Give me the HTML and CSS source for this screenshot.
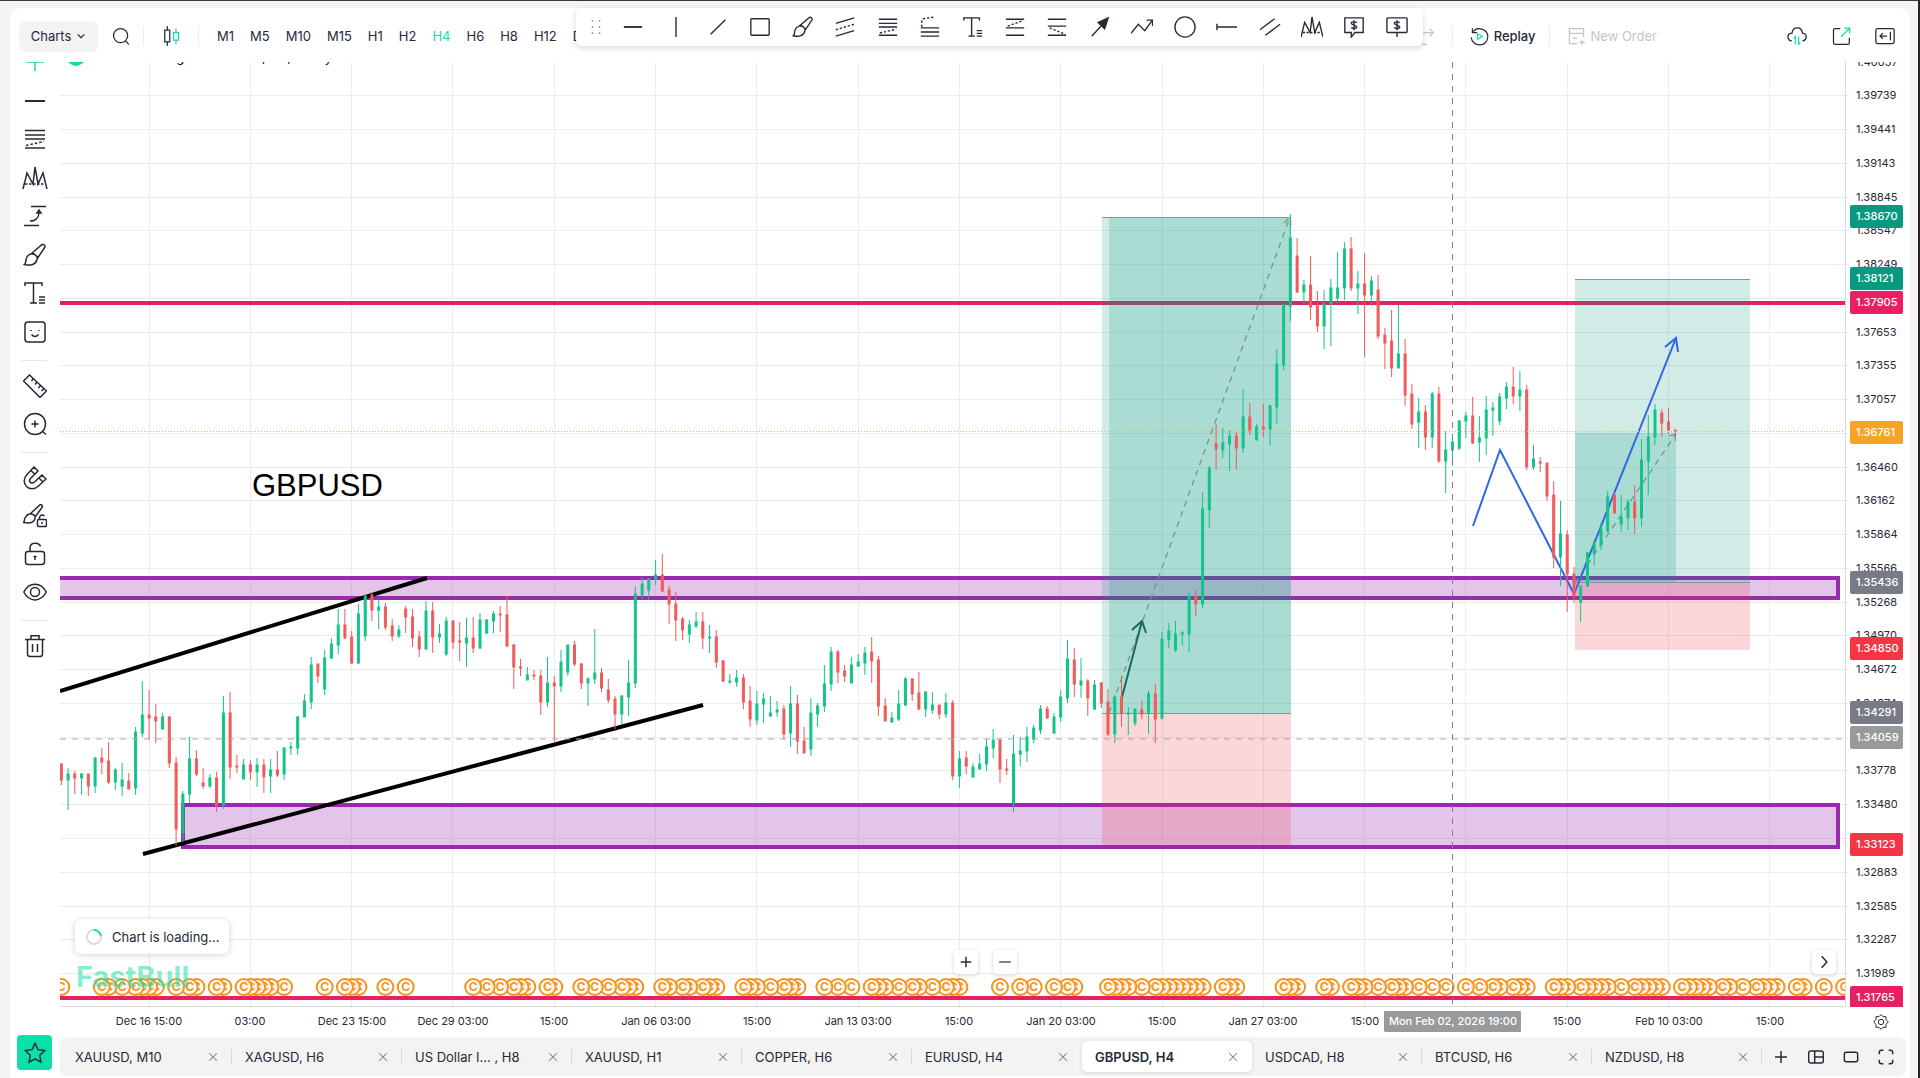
FILE: index.html
```html
<!DOCTYPE html>
<html lang="en">
<head>
    <meta charset="utf-8"/>
    <title>GBPUSD, H4</title>
    <meta name="viewport" content="width=device-width, initial-scale=1.0"/>
    <link rel="stylesheet" href="styles.css">
</head>
<body>
<svg class="sprite" aria-hidden="true">
    <symbol id="i-cross" viewBox="0 0 24 24"><path d="M3 12h18M12 3v18"/></symbol>
    <symbol id="i-hline" viewBox="0 0 24 24"><path d="M2 12h20" stroke-width="2"/></symbol>
    <symbol id="i-vline" viewBox="0 0 24 24"><path d="M12 1v22"/></symbol>
    <symbol id="i-trend" viewBox="0 0 24 24"><path d="M4 20L20 4"/></symbol>
    <symbol id="i-rect" viewBox="0 0 24 24"><rect x="2" y="3" width="20" height="18" rx="1"/></symbol>
    <symbol id="i-brush" viewBox="0 0 24 24"><path d="M8 11L19 1.500q3-.5 3 2.500L14 16M8 11c4-.5 7 2 6 5.500-1 5-6 6.500-12.500 5 1.500-1 1-3 1.500-5s2.500-5 5-5.500zM9.500 9.500l5.500 5"/></symbol>
    <symbol id="i-channel" viewBox="0 0 24 24"><path d="M2 8L22 2M2 22l20-6"/><path d="M2 15l20-6" stroke-dasharray="2.500 2"/></symbol>
    <symbol id="i-fib" viewBox="0 0 24 24"><path d="M2 3.500h20M2 8h20M2 12h20M2 21h20"/><path d="M3 18.500L21 14.500" stroke-dasharray="2.500 2"/></symbol>
    <symbol id="i-fibext" viewBox="0 0 24 24"><path d="M2 13h20M2 17.500h20M2 22h20"/><path d="M3 12V6q0-3 4-3.500L17 1" stroke-dasharray="2.500 2"/></symbol>
    <symbol id="i-text" viewBox="0 0 24 24"><path d="M2 5V2h17v3M10.500 2v20M7 22h7M16 16h6M16 19h6M16 22h6"/></symbol>
    <symbol id="i-proj" viewBox="0 0 24 24"><path d="M2 3.500h20M2 13h20M2 21h20"/><path d="M4 11L21 5" stroke-dasharray="2.500 2"/></symbol>
    <symbol id="i-projdown" viewBox="0 0 24 24"><path d="M2 3.500h20M2 11h20M2 21h20"/><path d="M4 13L21 20" stroke-dasharray="2.500 2"/></symbol>
    <symbol id="i-arrow" viewBox="0 0 24 24"><path d="M3 22L15 9"/><path class="solid" d="M21 2L10 7l7 7z"/></symbol>
    <symbol id="i-zigzag" viewBox="0 0 24 24"><path d="M0 19L8 9l7 7L23 5M17 4.500h6.500V11"/></symbol>
    <symbol id="i-ellipse" viewBox="0 0 24 24"><circle cx="12" cy="12" r="11"/></symbol>
    <symbol id="i-ray" viewBox="0 0 24 24"><path d="M1 8.500v7M1 12h22"/></symbol>
    <symbol id="i-parallel" viewBox="0 0 24 24"><path d="M1 15L17 3M7 21L23 9"/></symbol>
    <symbol id="i-wave" viewBox="0 0 24 24"><path d="M0 23L4 7l6 11L12 1l3 17 5-11 4 16"/><path d="M2 18h20" stroke-dasharray="2.500 1.500"/></symbol>
    <symbol id="i-callout" viewBox="0 0 24 24"><path d="M2 2h20v16h-9l-4 5v-5H2z"/><path d="M15 7.500c-1-1.500-6-1.500-6 .5s6 2 6 4-5 2-6 .5M12 4.500v11"/></symbol>
    <symbol id="i-pricenote" viewBox="0 0 24 24"><rect x="1" y="2" width="22" height="16" rx="1"/><path d="M15 7.500c-1-1.500-6-1.500-6 .5s6 2 6 4-5 2-6 .5M12 4.500v11M12 18v5"/></symbol>
    <symbol id="i-long" viewBox="0 0 24 24"><path d="M8 2.500h15M1 21.500h15M7 17c6 0 9-4 9-9"/><path class="solid" d="M16 6l-2 3h4z"/></symbol>
    <symbol id="i-smile" viewBox="0 0 24 24"><rect x="2" y="2" width="20" height="20" rx="3"/><path d="M8 10v1M16 10v1M8.500 14.500q3.500 4 7 0"/></symbol>
    <symbol id="i-ruler" viewBox="0 0 24 24"><path d="M6.500 1l17 16-6.500 6.500L.5 7zM8.500 7l2-2.500M12 10.500L14 8M15.500 14l2-2.500M18.500 17l2-2"/></symbol>
    <symbol id="i-zoom" viewBox="0 0 24 24"><circle cx="12" cy="12" r="10.500"/><path d="M12 8.500v7M8.500 12h7M19.500 19.500l3.500 3"/></symbol>
    <symbol id="i-magnet" viewBox="0 0 24 24"><path d="M11 1L4 8.500C-4 17 7 28 15.500 20L23 13l-4-4-7.500 7c-3 2.500-6.500-.5-4-3.500L15 5zM8 4.500l4 4M16 12l4 4"/></symbol>
    <symbol id="i-brushlock" viewBox="0 0 24 24"><path d="M7 10L17 .8q2.500-.5 2.500 2L12 13M7 10c3-.5 6 2 5 4.500-1 4-6 5-11.500 4C2 17 1 16 2 14s2.500-4 5-4z"/><rect x="14.500" y="15.500" width="9" height="7" rx="1"/><path d="M16.500 15.500V13q2-3.500 5-1M19 18v2"/></symbol>
    <symbol id="i-lock" viewBox="0 0 24 24"><rect x="2.500" y="9.500" width="19" height="13" rx="2.500"/><path d="M7 9.500V6c0-6 9-6 10.500-1.500M10.500 14.500h3M12 14.500v3.500"/></symbol>
    <symbol id="i-eye" viewBox="0 0 24 24"><path d="M.8 12C6 1.500 18 1.500 23.200 12 18 22.500 6 22.500.8 12z"/><circle cx="12" cy="12" r="4.500"/></symbol>
    <symbol id="i-trash" viewBox="0 0 24 24"><path d="M2 5.500h20M8 5V1.800h8V5M4.500 5.500V20q0 2.500 2.500 2.500h10q2.500 0 2.500-2.500V5.500M9.500 10v8M14.500 10v8"/></symbol>
    <symbol id="i-search" viewBox="0 0 24 24"><circle cx="11.500" cy="11.500" r="8.500"/><path d="M17.500 18l4 4"/></symbol>
    <symbol id="i-close" viewBox="0 0 24 24"><path d="M3 3l18 18M21 3L3 21"/></symbol>
    <symbol id="i-plus" viewBox="0 0 24 24"><path d="M12 3v18M3 12h18"/></symbol>
    <symbol id="i-gear" viewBox="0 0 24 24"><path d="M12 1l3 3h4.500v4.500L23 12l-3.500 3.500V20H15l-3 3-3-3H4.500v-4.500L1 12l3.500-3.500V4H9z"/><circle cx="12" cy="12" r="4"/></symbol>
</svg>

<div class="panel">
    <header class="toolbar">
        <button class="charts_btn">Charts
            <svg class="icon chevron" viewBox="0 0 12 12"><path d="M2 4l4 4 4-4"/></svg>
        </button>
        <button class="search_btn" aria-label="Search"><svg class="icon"><use href="#i-search"/></svg></button>
        <span class="divider"></span>
        <button class="type_btn" aria-label="Chart type">
            <svg class="icon" viewBox="0 0 24 24">
                <path d="M7.500 0v5M7.500 19v5M4.500 5h6v14h-6z"/>
                <path class="mint" d="M18 3v5M18 17v5M15 8h6v9h-6z"/>
            </svg>
        </button>
        <span class="divider"></span>
        <nav class="periods">
            <button>M1</button>
            <button>M5</button>
            <button>M10</button>
            <button>M15</button>
            <button>H1</button>
            <button>H2</button>
            <button class="active">H4</button>
            <button>H6</button>
            <button>H8</button>
            <button>H12</button>
            <button>D1</button>
        </nav>
        <div class="toolbar_right">
            <button class="muted" aria-label="Redo">
                <svg class="icon" viewBox="0 0 24 24"><path d="M22 7H11c-10 0-10 15 0 15h3M17 2l5 5-5 5"/></svg>
            </button>
            <span class="divider"></span>
            <button class="replay">
                <svg class="icon" viewBox="0 0 24 24">
                    <path d="M4 6C9-1 22 2 22.500 12c0 14-20 14-21 1M3 1.500V7h6"/>
                    <path class="mint" d="M9.500 8.500v7l6-3.500z"/>
                </svg>
                Replay
            </button>
            <span class="divider"></span>
            <button class="muted new_order">
                <svg class="icon" viewBox="0 0 24 24"><path d="M13 21H3V2h18v11M3 8h18M7 14h6M19 16v7M15.500 19.500h7"/></svg>
                New Order
            </button>
        </div>
        <div class="toolbar_end">
            <button aria-label="Cloud sync">
                <svg class="icon" viewBox="0 0 24 24">
                    <path d="M6 18C-1 17 0 8 6 8.500 7 0 18 0 18.500 8.500 25 9 24 17 18.500 18"/>
                    <path class="mint" d="M10 22v-9l-2 2M14 13v9l2-2"/>
                </svg>
            </button>
            <button aria-label="Open in new window">
                <svg class="icon" viewBox="0 0 24 24">
                    <path d="M11 3H5Q3 3 3 5v15q0 2 2 2h15q2 0 2-2v-6"/>
                    <path class="mint" d="M12 13L22 3M16 2.500h6.500V9"/>
                </svg>
            </button>
            <button aria-label="Collapse panel">
                <svg class="icon" viewBox="0 0 24 24"><rect x="1" y="3" width="22" height="18" rx="2"/><path d="M18.500 7v10M14.500 12H6M9.500 8.500L6 12l3.500 3.500"/></svg>
            </button>
        </div>
    </header>

    <div class="draw_bar">
        <svg class="drag" viewBox="0 0 12 18">
            <circle cx="2" cy="2" r="1"/><circle cx="10" cy="2" r="1"/>
            <circle cx="2" cy="9" r="1"/><circle cx="10" cy="9" r="1"/>
            <circle cx="2" cy="16" r="1"/><circle cx="10" cy="16" r="1"/>
        </svg>
        <button aria-label="Horizontal line"><svg class="icon"><use href="#i-hline"/></svg></button>
        <button aria-label="Vertical line"><svg class="icon"><use href="#i-vline"/></svg></button>
        <button aria-label="Trend line"><svg class="icon"><use href="#i-trend"/></svg></button>
        <button aria-label="Rectangle"><svg class="icon"><use href="#i-rect"/></svg></button>
        <button aria-label="Brush"><svg class="icon"><use href="#i-brush"/></svg></button>
        <button aria-label="Channel"><svg class="icon"><use href="#i-channel"/></svg></button>
        <button aria-label="Fibonacci"><svg class="icon"><use href="#i-fib"/></svg></button>
        <button aria-label="Fibonacci extension"><svg class="icon"><use href="#i-fibext"/></svg></button>
        <button aria-label="Text"><svg class="icon"><use href="#i-text"/></svg></button>
        <button aria-label="Long position"><svg class="icon"><use href="#i-proj"/></svg></button>
        <button aria-label="Short position"><svg class="icon"><use href="#i-projdown"/></svg></button>
        <button aria-label="Arrow"><svg class="icon"><use href="#i-arrow"/></svg></button>
        <button aria-label="Path"><svg class="icon"><use href="#i-zigzag"/></svg></button>
        <button aria-label="Ellipse"><svg class="icon"><use href="#i-ellipse"/></svg></button>
        <button aria-label="Horizontal ray"><svg class="icon"><use href="#i-ray"/></svg></button>
        <button aria-label="Parallel lines"><svg class="icon"><use href="#i-parallel"/></svg></button>
        <button aria-label="Waves"><svg class="icon"><use href="#i-wave"/></svg></button>
        <button aria-label="Price label"><svg class="icon"><use href="#i-callout"/></svg></button>
        <button aria-label="Price note"><svg class="icon"><use href="#i-pricenote"/></svg></button>
    </div>

    <main class="workspace">
        <aside class="tools">
            <div class="tools_group lines">
                <button class="active" aria-label="Crosshair"><svg class="icon"><use href="#i-cross"/></svg></button>
                <button aria-label="Lines"><svg class="icon"><use href="#i-hline"/></svg></button>
                <button aria-label="Fibonacci tools"><svg class="icon"><use href="#i-fib"/></svg></button>
                <button aria-label="Patterns"><svg class="icon wide"><use href="#i-wave"/></svg></button>
                <button aria-label="Positions"><svg class="icon"><use href="#i-long"/></svg></button>
                <button aria-label="Brushes"><svg class="icon"><use href="#i-brush"/></svg></button>
                <button aria-label="Text tools"><svg class="icon"><use href="#i-text"/></svg></button>
                <button aria-label="Stickers"><svg class="icon"><use href="#i-smile"/></svg></button>
            </div>
            <hr>
            <div class="tools_group">
                <button aria-label="Measure"><svg class="icon"><use href="#i-ruler"/></svg></button>
                <button aria-label="Zoom in"><svg class="icon"><use href="#i-zoom"/></svg></button>
            </div>
            <hr>
            <div class="tools_group">
                <button aria-label="Magnet"><svg class="icon"><use href="#i-magnet"/></svg></button>
                <button aria-label="Keep drawing"><svg class="icon"><use href="#i-brushlock"/></svg></button>
                <button aria-label="Lock drawings"><svg class="icon"><use href="#i-lock"/></svg></button>
                <button aria-label="Hide drawings"><svg class="icon"><use href="#i-eye"/></svg></button>
            </div>
            <hr>
            <div class="tools_group">
                <button aria-label="Remove drawings"><svg class="icon"><use href="#i-trash"/></svg></button>
            </div>
        </aside>

        <section class="chart">
            <svg class="chart_svg" viewBox="60 62 1850 975" preserveAspectRatio="xMinYMin slice">
                <defs>
                    <clipPath id="plot"><rect x="60" y="62" width="1785" height="944"/></clipPath>
                    <clipPath id="scale"><rect x="1845" y="62" width="65" height="945"/></clipPath>
                </defs>
                <g id="grid" class="grid"></g>
                <path class="axis" d="M60 1006.500H1845.500V62"/>

                <g clip-path="url(#plot)">
                    <circle class="logo_dot" cx="76" cy="57" r="9"/>
                    <text class="legend" x="94" y="62">Pound Sterling vs US Dollar, H4, Today</text>

                    <path class="level" d="M60 303H1845"/>
                    <rect class="zone" x="50" y="578" width="1788" height="20"/>
                    <rect class="zone" x="183" y="805" width="1655" height="42"/>
                    <path class="trend" d="M60 691L427 578M143 854L703 705"/>
                    <text class="note" x="252" y="496">GBPUSD</text>

                    <g class="position">
                        <rect class="profit" x="1102" y="217" width="189" height="496"/>
                        <rect class="profit" x="1109" y="217" width="182" height="496"/>
                        <rect class="loss" x="1102" y="713" width="189" height="133"/>
                        <path class="edge" d="M1102 217.500H1291M1102 713.500H1291"/>
                        <path class="path_line" d="M1109 713L1290 217M1284 223l6-6 1 8"/>
                    </g>
                    <g class="position">
                        <rect class="profit" x="1575" y="279" width="175" height="304"/>
                        <rect class="profit" x="1575" y="433" width="101" height="150"/>
                        <rect class="loss" x="1575" y="583" width="175" height="67"/>
                        <path class="edge" d="M1575 279.500H1750M1575 582.500H1750"/>
                        <path class="path_line" d="M1575 583L1676 434M1669 436l7-2-1 7"/>
                    </g>
                    <path class="arrow_green" d="M1122 697L1142 621M1132 630l10-9 4 12"/>
                    <path class="arrow_blue" d="M1473 526L1500 450L1574 594L1676 338M1665 347l11-9 2 14"/>

                    <g id="candles"></g>
                    <path class="price_line" d="M60 431.500H1845"/>
                    <g id="coins" class="coins"></g>
                    <text class="watermark" x="76" y="987">FastBull</text>
                    <path class="level bottom" d="M60 998H1845"/>
                    <path class="cross_x" d="M60 739H1845"/>
                    <path class="cross_y" d="M1452.500 62V1006"/>
                </g>

                <g id="prices" class="prices" clip-path="url(#scale)"></g>
                <g id="times" class="times"></g>
            </svg>

            <div class="toast"><span class="spinner"></span>Chart is loading...</div>
            <div class="zoom_btns">
                <button aria-label="Zoom in"><svg class="icon"><use href="#i-plus"/></svg></button>
                <button aria-label="Zoom out"><svg class="icon"><use href="#i-hline"/></svg></button>
            </div>
            <button class="latest" aria-label="Go to latest bar"><svg class="icon" viewBox="0 0 24 24"><path d="M8 2l9 10-9 10"/></svg></button>
            <button class="settings" aria-label="Scale settings"><svg class="icon"><use href="#i-gear"/></svg></button>
        </section>
    </main>

    <footer class="bottom">
        <button class="star" aria-label="Favourites">
            <svg class="icon" viewBox="0 0 24 24"><path d="M12 1.500l3.200 6.800 7.300 1-5.300 5.200 1.300 7.500-6.500-3.600L5.500 22l1.300-7.500L1.500 9.300l7.300-1z"/></svg>
        </button>
        <div class="tabs" id="tabs">
            <div class="tabs_actions">
                <button aria-label="Add tab"><svg class="icon"><use href="#i-plus"/></svg></button>
                <button aria-label="Layout"><svg class="icon" viewBox="0 0 24 24"><rect x="1" y="3" width="22" height="18" rx="3"/><path d="M10 3v18M10 12h13"/></svg></button>
                <button aria-label="Single chart"><svg class="icon" viewBox="0 0 24 24"><rect x="2" y="5" width="20" height="14" rx="3"/></svg></button>
                <button aria-label="Full screen"><svg class="icon" viewBox="0 0 24 24"><path d="M2 8V5q0-3 3-3h3M16 2h3q3 0 3 3v3M22 16v3q0 3-3 3h-3M8 22H5q-3 0-3-3v-3"/></svg></button>
            </div>
        </div>
    </footer>
</div>
<script src="script.js"></script>
</body>
</html>
```
FILE: styles.css
```css
* {
    box-sizing: border-box;
}

body {
    margin: 0;
    height: 100vh;
    padding: 7px 8px 0 10px;
    border-top: 1px solid #3b373a;
    border-right: 2px solid #2a2224;
    background: #f4f4f5;
    color: #252a36;
    font-family: Inter, Roboto, "Liberation Sans", sans-serif;
    font-size: 13px;
    overflow: hidden;
}

button {
    display: flex;
    align-items: center;
    justify-content: center;
    padding: 0;
    border: 0;
    background: none;
    color: inherit;
    font: inherit;
    cursor: pointer;
}

.sprite {
    display: none;
}

.icon {
    flex: none;
    width: 22px;
    height: 22px;
    fill: none;
    stroke: currentColor;
    stroke-width: 1.5;
}

.icon .mint {
    stroke: #14dca5;
}

.solid {
    fill: currentColor;
}

.panel {
    display: flex;
    flex-direction: column;
    height: 100%;
    border-radius: 10px 10px 0 0;
    background: #fff;
}

/* top toolbar */
.toolbar {
    display: flex;
    align-items: center;
    flex: none;
    height: 54px;
    padding: 2px 15px 0 9px;
}

.charts_btn {
    gap: 5px;
    width: 79px;
    height: 31px;
    border-radius: 6px;
    background: #f3f3f4;
}

.chevron {
    width: 10px;
    height: 10px;
}

.search_btn {
    width: 45px;
}

.search_btn .icon, .type_btn .icon {
    width: 20px;
    height: 20px;
}

.type_btn {
    width: 54px;
}

.divider {
    width: 1px;
    height: 20px;
    background: #ececee;
}

.periods {
    display: flex;
    gap: 16px;
    margin-left: 18px;
}

.periods .active, .tools .active {
    color: #14dca5;
}

.toolbar_right {
    display: flex;
    align-items: center;
    margin-left: auto;
    margin-right: 130px;
}

.toolbar_right .icon {
    width: 19px;
    height: 19px;
}

.toolbar_right .divider {
    margin: 0 17px;
}

.toolbar_right button {
    gap: 5px;
}

.toolbar_right .replay {
    margin-right: -4px;
    font-weight: 500;
}

.toolbar_right .muted {
    color: #c2c4ca;
}

.toolbar_end {
    display: flex;
    gap: 24px;
}

.toolbar_end .icon {
    width: 20px;
    height: 20px;
}

/* floating drawing bar */
.draw_bar {
    position: absolute;
    top: 8px;
    left: 30%;
    z-index: 2;
    display: flex;
    align-items: center;
    width: 847px;
    height: 38px;
    padding: 0 5px 0 14px;
    border-radius: 6px;
    background: #fff;
    box-shadow: 0 2px 6px rgba(0, 0, 0, 0.16);
}

.draw_bar button {
    flex: 1;
    height: 38px;
}

.drag {
    width: 12px;
    height: 16px;
    margin-right: 10px;
    fill: #8d9099;
}

/* left tools + chart */
.workspace {
    display: flex;
    flex: 1;
    min-height: 0;
}

.tools {
    width: 50px;
    padding: 0 11px 0 10px;
    overflow: hidden;
}

.tools_group button {
    width: 100%;
    height: 38px;
}

.tools_group.lines {
    display: flex;
    flex-direction: column;
    height: 308px;
    margin-top: -19px;
}

.tools_group.lines button {
    flex: 1;
}

.tools .icon {
    width: 24px;
    height: 24px;
}

.tools hr {
    height: 1px;
    margin: 9px 2px 6px 1px;
    border: 0;
    background: #e8e8ea;
}

.tools .wide {
    width: 26px;
}

.chart {
    position: relative;
    flex: 1;
    min-width: 0;
}

.chart_svg {
    display: block;
    width: 100%;
    height: 100%;
}

.grid {
    stroke: #ebecec;
}

.axis {
    fill: none;
    stroke: #d9dadc;
}

.logo_dot {
    fill: #14dca5;
}

.legend {
    font-size: 13px;
}

.level {
    stroke: #de2262;
    stroke-width: 4;
}

.level.bottom {
    stroke: #e91e63;
}

.zone {
    fill: rgba(156, 39, 176, 0.27);
    stroke: #972bab;
    stroke-width: 4;
}

.trend {
    stroke: #000;
    stroke-width: 4;
}

.note {
    font: 31px "Liberation Sans", Arial, sans-serif;
    fill: #000;
}

.profit {
    fill: rgba(8, 153, 129, 0.19);
}

.loss {
    fill: rgba(242, 54, 69, 0.2);
}

.edge {
    stroke: #7f9c9b;
}

.path_line {
    fill: none;
    stroke: #71908c;
    stroke-width: 1.2;
    stroke-dasharray: 6 5;
}

.arrow_green {
    fill: none;
    stroke: #186b59;
    stroke-width: 2;
}

.arrow_blue {
    fill: none;
    stroke: #2f66e8;
    stroke-width: 2;
}

.up {
    fill: #12c48a;
    stroke: #12c48a;
}

.down {
    fill: #ef5b5b;
    stroke: #ef5b5b;
}

.price_line {
    stroke: #f0b04a;
    stroke-dasharray: 1 2;
}

.watermark {
    font-size: 29px;
    font-weight: 700;
    fill: rgba(20, 220, 165, 0.5);
}

.coins circle {
    fill: rgba(255, 255, 255, 0.8);
    stroke: #f7931a;
    stroke-width: 2;
}

.coins text {
    fill: #f7931a;
    font-size: 12px;
    font-weight: 700;
    text-anchor: middle;
}

.cross_x {
    stroke: #a8a8a8;
    stroke-dasharray: 6 6;
}

.cross_y {
    stroke: #808285;
    stroke-dasharray: 6 6;
}

.prices, .times {
    fill: #252a36;
    font-size: 11px;
}

.times {
    text-anchor: middle;
}

.tag_text {
    fill: #fff;
    font-weight: 500;
}

.toast {
    position: absolute;
    left: 15px;
    bottom: 83px;
    display: flex;
    align-items: center;
    gap: 10px;
    height: 35px;
    padding: 0 9px 0 11px;
    border-radius: 6px;
    background: #fff;
    box-shadow: 0 1px 6px rgba(0, 0, 0, 0.18);
}

.spinner {
    width: 16px;
    height: 16px;
    border: 2px solid #d9dbde;
    border-top-color: #14dca5;
    border-radius: 50%;
    transform: rotate(40deg);
}

.zoom_btns {
    position: absolute;
    left: 0;
    right: 0;
    bottom: 63px;
    display: flex;
    justify-content: center;
    gap: 15px;
}

.zoom_btns button, .latest {
    width: 24px;
    height: 24px;
    border-radius: 4px;
    background: #fff;
    box-shadow: 0 1px 4px rgba(0, 0, 0, 0.18);
}

.zoom_btns .icon, .latest .icon {
    width: 14px;
    height: 14px;
    stroke-width: 2.5;
}

.latest {
    position: absolute;
    right: 74px;
    bottom: 63px;
}

.settings {
    position: absolute;
    right: 21px;
    bottom: 7px;
}

.settings .icon {
    width: 16px;
    height: 16px;
}

/* bottom tabs */
.bottom {
    display: flex;
    flex: none;
    gap: 8px;
    height: 41px;
    padding: 0 4px 2px 7px;
}

.star {
    width: 35px;
    height: 35px;
    margin-top: -2px;
    border-radius: 4px;
    background: #0be0aa;
}

.tabs {
    display: flex;
    align-items: center;
    flex: 1;
    min-width: 0;
    padding: 0 12px 0 2px;
    border-radius: 8px;
    background: #f3f3f4;
}

.tab {
    display: flex;
    align-items: center;
    justify-content: space-between;
    flex: 0 1 170px;
    height: 31px;
    padding: 0 14px 0 13px;
    border-radius: 5px;
    white-space: nowrap;
}

.tab:not(.active) {
    background: linear-gradient(#d9d9dc, #d9d9dc) right center / 1px 15px no-repeat;
}

.tab.before_active {
    background: none;
}

.tab.active {
    background: #fff;
    font-weight: 600;
    box-shadow: 0 1px 4px rgba(0, 0, 0, 0.12);
}

.tab .icon {
    width: 10px;
    height: 10px;
    stroke: #777b84;
    stroke-width: 2.5;
}

.tabs_actions {
    display: flex;
    flex: 1;
    justify-content: space-between;
    margin-left: 11px;
}

.tabs_actions .icon {
    width: 16px;
    height: 16px;
    stroke-width: 2.2;
}
```
FILE: script.js
```js
const barStep = 6.753;
const firstBar = 61.3;
const gridStep = 101.3;

// u/d, high, body top, body bottom, low
const bars = `
d763,764,780,785 u768,774,780,810 d771,774,778,794 u773,774,778,795 d774,774,786,796 u757,758,786,793
d748,758,762,774 d742,761,782,784 u768,770,782,790 u763,780,786,796 d773,781,789,789 u727,732,788,795
u681,715,733,737 d690,715,718,740 d704,717,721,743 u713,717,729,729 d716,717,763,768 d757,763,829,846
u791,794,833,842 u737,759,794,803 d750,759,774,776 d768,783,786,789 u774,778,786,788 d772,778,806,812
u696,713,805,809 d692,713,767,779 d755,766,767,773 u759,765,779,779 d760,765,772,780 u758,765,772,787
d759,765,777,793 u759,770,776,793 d751,770,775,777 u747,748,774,780 u742,747,748,755 u716,717,748,755
u694,701,717,717 u657,665,702,709 d664,664,676,683 u650,658,689,695 u638,644,658,659 u609,625,645,654
d609,625,638,639 d631,637,663,664 u604,614,663,664 u594,596,636,641 d592,595,610,621 u600,607,610,629
d603,607,627,630 d619,626,636,641 u625,630,636,638 d606,609,617,633 d609,617,638,647 d631,637,649,657
u601,611,649,650 d602,611,637,653 u624,634,637,643 u617,621,654,656 d620,621,642,649 d622,641,642,661
u618,638,643,667 d617,638,648,653 u613,620,648,649 u619,620,633,634 u611,614,621,633 d606,614,615,632
d596,615,646,647 d644,645,667,689 d659,667,668,676 u667,675,680,680 d670,675,676,680 d670,676,702,715
u657,683,702,707 d676,683,686,743 u650,662,686,692 u645,645,672,676 d641,645,664,666 d663,664,683,689
u677,679,683,706 u629,673,679,684 d668,673,688,692 d679,690,700,703 d696,699,714,729 u695,696,714,724
u660,683,697,716 u586,594,683,688 u577,584,595,599 u578,579,590,600 u560,575,579,585 d554,575,591,592
d586,590,604,624 d592,604,620,641 d617,619,630,640 u620,625,634,643 u612,622,626,628 d612,622,638,649
u625,637,638,653 d630,637,662,668 d660,661,681,682 u674,681,682,684 u670,678,682,687 d674,678,702,709
d686,701,719,727 u691,704,720,725 u693,699,704,723 u696,713,716,717 u701,710,712,717 d705,709,734,739
u686,704,733,747 d695,704,741,754 d727,741,753,753 u698,713,749,756 u703,706,714,727 u665,684,706,712
u647,652,684,691 d650,652,672,683 d665,671,676,682 u657,665,683,683 u654,662,666,667 u647,653,663,675
d637,652,661,683 d656,660,706,716 d698,706,721,721 u712,718,722,723 u690,704,719,721 u677,679,705,706
d678,679,694,701 d672,693,709,710 u691,692,709,717 u692,705,710,714 d705,705,714,719 u693,703,714,718
d700,703,776,780 u751,759,776,788 d751,758,766,774 u763,767,777,778 u754,764,769,769 u739,747,764,771
u729,740,748,758 d739,740,769,783 d759,769,770,775 u735,754,803,812 u737,751,754,766 u727,737,751,762
u725,728,739,743 u705,709,730,734 d706,709,718,719 u713,717,733,734 u690,697,717,722 u640,659,698,703
d648,660,684,697 u658,681,685,698 d679,681,698,716 u680,685,709,710 d682,683,703,708 d689,702,734,736
u695,697,734,743 d676,697,713,727 u707,713,714,735 u708,709,723,726 d700,710,714,719 u691,694,713,734
d684,694,719,743 u632,639,718,720 u623,631,640,648 u621,634,650,652 u631,633,634,645 u592,596,634,652
d590,596,604,616 u492,509,604,608 u466,468,510,528 d424,444,449,470 u428,443,450,458 u430,436,444,471
d432,436,448,470 u389,417,448,453 d403,417,430,435 u424,427,440,440 d404,427,429,437 u405,406,429,446
u349,364,407,424 u304,305,365,370 u214,238,306,321 d238,256,292,293 u280,285,292,304 d256,285,307,320
d291,306,326,332 u290,304,326,349 u279,288,304,346 u252,288,298,303 u242,249,288,300 d237,249,288,291
u271,284,288,314 d253,284,295,357 u276,281,295,306 d275,290,336,339 d328,335,343,369 d310,341,368,377
u305,354,368,368 d339,354,395,406 d384,394,424,429 u398,412,422,448 d405,412,437,450 u392,394,437,448
d387,394,461,463 u431,450,461,493 u440,442,450,466 u420,421,448,450 u412,416,421,438 d397,416,443,444
u416,438,442,462 u396,410,438,455 u402,408,410,436 u393,397,421,425 u382,387,398,409 d367,387,396,404
u371,390,396,411 d385,390,467,470 u445,459,467,470 d457,462,463,472 d463,463,496,501 d481,495,557,568
u501,534,557,586 d530,535,574,612 d567,574,596,603 u586,586,602,622 u552,553,586,587 u539,544,553,566
u523,529,545,550 u491,497,531,533 d493,495,513,513 u495,517,524,532 u499,502,518,530 d485,502,518,534
u439,460,518,527 u415,437,461,495 u404,410,437,445 d409,413,423,437 d408,422,430,434 d430,430,431,438
`.trim().split(/\s+/);

// bar numbers that carry a calendar event
const events = [0, 6, 7, 9, 11, 12, 13, 14, 17, 19, 20, 23, 24, 27, 28, 29, 30, 31, 33, 39, 42, 43, 44, 48, 51,
    61, 63, 65, 67, 68, 69, 72, 73, 77, 79, 81, 83, 84, 85, 89, 90, 92, 93, 95, 96, 97, 101, 102, 103, 105, 107,
    108, 109, 113, 115, 117, 120, 121, 122, 124, 126, 127, 129, 131, 132, 133, 139, 142, 144, 147, 149, 150,
    155, 156, 157, 158, 160, 162, 163, 164, 165, 166, 167, 168, 169, 172, 173, 174, 181, 182, 183, 187, 188,
    191, 192, 193, 195, 197, 198, 199, 201, 203, 205, 208, 210, 212, 213, 215, 216, 217, 221, 222, 223, 225,
    226, 227, 228, 229, 231, 233, 234, 235, 236, 237, 240, 241, 242, 243, 244, 246, 247, 249, 251, 252, 253,
    254, 257, 258, 261, 264];

const prices = ['1.40037', '1.39739', '1.39441', '1.39143', '1.38845', '1.38547', '1.38249', '1.37951', '1.37653',
    '1.37355', '1.37057', '1.36758', '1.36460', '1.36162', '1.35864', '1.35566', '1.35268', '1.34970', '1.34672',
    '1.34374', '1.34076', '1.33778', '1.33480', '1.33182', '1.32883', '1.32585', '1.32287', '1.31989'];

const hiddenPrices = ['1.37951', '1.36758', '1.34076', '1.33182'];

const tags = [
    ['1.38670', 217, '#089981'],
    ['1.38121', 279, '#089981'],
    ['1.37905', 303, '#e91e63'],
    ['1.36761', 433, '#f7a426'],
    ['1.35436', 583, '#787b86'],
    ['1.34850', 649, '#f23645'],
    ['1.34291', 713, '#787b86'],
    ['1.34059', 738, '#989a9a'],
    ['1.33123', 845, '#f23645'],
    ['1.31765', 998, '#e91e63']
];

const times = ['Dec 16 15:00', '03:00', 'Dec 23 15:00', 'Dec 29 03:00', '15:00', 'Jan 06 03:00', '15:00',
    'Jan 13 03:00', '15:00', 'Jan 20 03:00', '15:00', 'Jan 27 03:00', '15:00', '', '15:00', 'Feb 10 03:00', '15:00'];

const tabs = ['XAUUSD, M10', 'XAGUSD, H6', 'US Dollar I... , H8', 'XAUUSD, H1', 'COPPER, H6', 'EURUSD, H4',
    'GBPUSD, H4', 'USDCAD, H8', 'BTCUSD, H6', 'NZDUSD, H8'];
const activeTab = 6;

function barX(index) {
    return firstBar + index * barStep;
}

function priceY(index) {
    return Math.floor(62 + index * 33.76);
}

function fill(id, html) {
    document.getElementById(id).innerHTML = html;
}

fill('grid',
    times.map((t, i) => {
        const x = Math.floor(149 + i * gridStep) + 0.5;
        return `<path d="M${x} 62V1010"/>`;
    }).join('') +
    prices.slice(1).map((p, i) => {
        const y = priceY(i + 1) + 0.5;
        return `<path d="M60 ${y}H1849"/>`;
    }).join('')
);

fill('candles', bars.map((bar, i) => {
    const [high, top, bottom, low] = bar.slice(1).split(',').map(Number);
    const x = barX(i).toFixed(1);
    const name = bar[0] === 'u' ? 'up' : 'down';
    return `<g class="${name}"><path d="M${x} ${high}V${low}"/>` +
        `<rect x="${x - 1}" y="${top}" width="2" height="${Math.max(bottom - top, 0.1)}"/></g>`;
}).join(''));

// earlier coins lie over the later ones
fill('coins', events.slice().reverse().map(i => {
    const x = barX(i).toFixed(1);
    return `<circle cx="${x}" cy="987" r="8"/><text x="${x}" y="991">C</text>`;
}).join(''));

fill('prices',
    prices.map((p, i) => hiddenPrices.includes(p) ? '' : `<text x="1856" y="${priceY(i) + 4}">${p}</text>`).join('') +
    tags.map(([text, y, color]) => `<rect x="1850" y="${y - 12}" width="53" height="23" rx="2" fill="${color}"/>` +
        `<text class="tag_text" x="1856" y="${y + 3}">${text}</text>`).join('')
);

fill('times',
    times.map((t, i) => `<text x="${Math.round(149 + i * gridStep)}" y="1025">${t}</text>`).join('') +
    '<rect x="1384" y="1011" width="137" height="21" rx="1" fill="#989a9b"/>' +
    '<text class="tag_text" x="1453" y="1025">Mon Feb 02, 2026 19:00</text>'
);

const tabsBlock = document.getElementById('tabs');
tabs.forEach((name, index) => {
    const tab = document.createElement('div');
    tab.className = 'tab';
    if (index === activeTab) tab.classList.add('active');
    if (index === activeTab - 1) tab.classList.add('before_active');
    tab.innerHTML = `<button>${name}</button>` +
        `<button aria-label="Close ${name}"><svg class="icon"><use href="#i-close"/></svg></button>`;
    tabsBlock.insertBefore(tab, tabsBlock.lastElementChild);
});
```
